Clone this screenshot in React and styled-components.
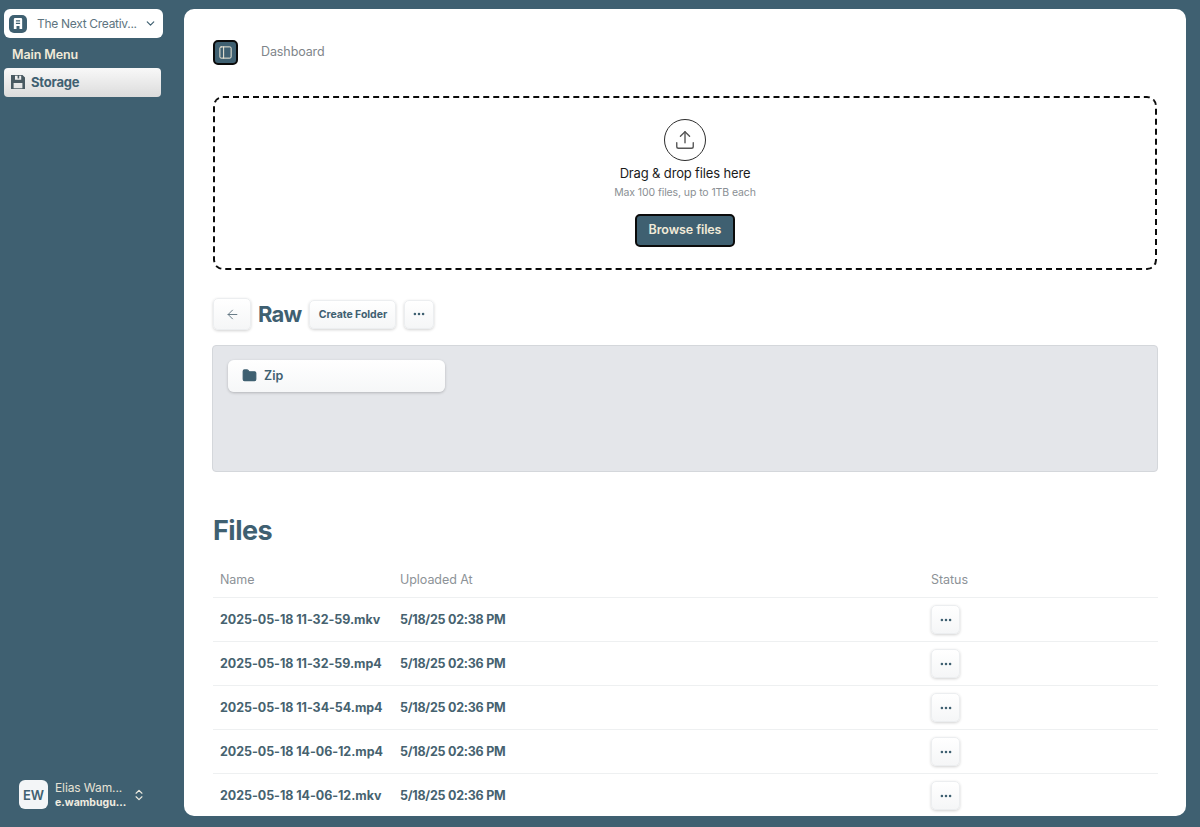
import React from "react";
import styled, { createGlobalStyle } from "styled-components";
import { ArrowLeft, ChevronDown, ChevronsUpDown, Ellipsis, Folder, PanelLeft, Upload } from "lucide-react";

const teal = "#3f6071";
const Global = createGlobalStyle`
  html, body { margin: 0; height: 100%; overflow: hidden; background: ${teal}; }
  body { font-family: Inter, "Open Sans", "Liberation Sans", sans-serif; }
  * { box-sizing: border-box; }
`;
const Shell = styled.div`display: flex; height: 827px; width: 1200px; background: ${teal};`;
const Sidebar = styled.aside`width: 184px; flex: none; display: flex; flex-direction: column; padding: 9px 21px 18px 4px;`;
const Team = styled.div`height: 29px; width: 159px; background: #fff; border-radius: 6px; display: flex; align-items: center; padding: 0 6px 0 5px; gap: 10px; color: #5d7480; font-size: 12px; letter-spacing: -.3px;`;
const TeamLogo = styled.span`width: 18px; height: 18px; border-radius: 5px; background: ${teal}; display: flex; align-items: center; justify-content: center; flex: none;`;
const TeamName = styled.span`flex: 1; min-width: 0; white-space: nowrap;`;
const MenuLabel = styled.div`margin: 8px 0 0 8px; color: #f1ead8; font-size: 12.5px; font-weight: 600; line-height: 17px; letter-spacing: -.1px;`;
const NavItem = styled.div`margin-top: 5px; width: 157px; height: 29px; border-radius: 4px; background: linear-gradient(#f8f8f8, #dcdcdc); display: flex; align-items: center; gap: 6px; padding: 0 0 1px 7px; color: ${teal}; font-size: 13px; font-weight: 700; letter-spacing: -.2px; svg { flex: none; }`;
const UserRow = styled.div`margin-top: auto; display: flex; align-items: center; padding-left: 15px; gap: 5px;`;
const Avatar = styled.div`width: 29px; height: 29px; margin-right: 2px; border-radius: 6px; background: #f3f5f7; color: ${teal}; display: flex; align-items: center; justify-content: center; font-size: 13px; font-weight: 600;`;
const UserText = styled.div`width: 72px; display: flex; flex-direction: column; gap: 1px;`;
const UserName = styled.span`color: #e6e2d5; font-size: 12px; line-height: 15px; white-space: nowrap; letter-spacing: -.1px;`;
const UserMail = styled.span`color: #f0ece0; font-size: 10.5px; font-weight: 700; line-height: 13px; white-space: nowrap;`;
const Main = styled.main`width: 1002px; height: 807px; margin-top: 9px; background: #fff; border-radius: 10px; padding: 31px 28px 0 29px; overflow: hidden; flex: none;`;
const Header = styled.header`display: flex; align-items: center; gap: 23px; height: 25px;`;
const Toggle = styled.div`width: 25px; height: 25px; border-radius: 5px; background: ${teal}; border: 2px solid #0b0b0b; display: flex; align-items: center; justify-content: center;`;
const Crumb = styled.span`color: #80858a; font-size: 12.5px; letter-spacing: -.1px; padding-bottom: 2px;`;
const Drop = styled.section`margin-top: 31px; height: 174px; width: 944px; border: 2px dashed #0b0b0b; border-radius: 10px; display: flex; flex-direction: column; align-items: center; padding-top: 21px;`;
const Circle = styled.div`width: 42px; height: 42px; border-radius: 50%; border: 1.2px solid #2d2d2d; display: flex; align-items: center; justify-content: center;`;
const DropTitle = styled.div`margin-top: 3px; font-size: 13px; font-weight: 400; color: #1b1b1b; line-height: 18px; letter-spacing: -.15px;`;
const DropSub = styled.div`margin-top: 4px; font-size: 10.5px; color: #8a8f94; line-height: 14px; letter-spacing: -.1px;`;
const Browse = styled.button`margin-top: 14px; width: 100px; height: 33px; border-radius: 5px; background: ${teal}; border: 2px solid #0b0b0b; color: #f1ead8; font: 600 12.5px Inter, sans-serif; letter-spacing: -.1px; padding: 0 0 2px;`;
const Toolbar = styled.div`margin-top: 28px; display: flex; align-items: center; height: 32px;`;
const softBtn = `background: linear-gradient(#fff, #f5f6f7); border: 1px solid #eceef0; box-shadow: 0 1px 3px rgba(0,0,0,.18); border-radius: 5px; display: flex; align-items: center; justify-content: center; padding: 0; color: ${teal};`;
const BackBtn = styled.div`${softBtn} width: 38px; height: 32px;`;
const Title = styled.h2`margin: 0 8px 0 7px; font-size: 22px; font-weight: 700; color: ${teal}; letter-spacing: -.8px; line-height: 32px;`;
const SmallBtn = styled.div`${softBtn} height: 29px; width: ${p => p.$w}px; font-size: 10.5px; font-weight: 700; letter-spacing: -.05px; margin-right: 8px;`;
const FolderPanel = styled.section`margin: 15px 0 0 -1px; height: 127px; width: 946px; background: #e4e6ea; border: 1px solid #d4d7db; border-radius: 4px; padding: 14px 15px;`;
const FolderCard = styled.div`width: 217px; height: 32px; border-radius: 6px; background: linear-gradient(#fff, #f6f7f8); box-shadow: 0 1px 3px rgba(0,0,0,.22); display: flex; align-items: center; gap: 7px; padding: 0 0 1px 14px; color: ${teal}; font-size: 12.5px; font-weight: 600;`;
const FilesTitle = styled.h2`margin: 42px 0 0; font-size: 27px; font-weight: 700; color: ${teal}; line-height: 34px; letter-spacing: -.5px;`;
const Row = styled.div`display: grid; grid-template-columns: 180px 531px 1fr; align-items: center; width: 945px; padding-left: 7px; border-bottom: 1px solid #eef0f1; height: ${p => p.$h}px;`;
const HeadCell = styled.span`color: #8d9297; font-size: 12.5px; letter-spacing: -.05px;`;
const Cell = styled.span`color: #46626f; font-size: 12.5px; font-weight: 700; white-space: nowrap; letter-spacing: ${p => p.$track}px;`;
const RowBtn = styled.div`${softBtn} width: 29px; height: 29px;`;
const TableHead = styled.div`margin-top: 13px;`;

const files = [
  ["2025-05-18 11-32-59.mkv", "5/18/25 02:38 PM"],
  ["2025-05-18 11-32-59.mp4", "5/18/25 02:36 PM"],
  ["2025-05-18 11-34-54.mp4", "5/18/25 02:36 PM"],
  ["2025-05-18 14-06-12.mp4", "5/18/25 02:36 PM"],
  ["2025-05-18 14-06-12.mkv", "5/18/25 02:36 PM"],
];

const BuildingMark = () => (
  <svg width="10" height="13" viewBox="0 0 12 14" aria-hidden="true">
    <path fill="#fff" fillRule="evenodd" d="M2.5.5h7A1.5 1.5 0 0 1 11 2v11.5H7.8V10H4.2v3.5H1V2A1.5 1.5 0 0 1 2.5.5ZM3.5 3v1.7h5V3Zm0 3v1.7h5V6Z" />
  </svg>
);

const FloppyMark = () => (
  <svg width="14" height="14" viewBox="0 0 14 14" aria-hidden="true">
    <path fill="#4a5a62" fillRule="evenodd" d="M0 0h11.5L14 2.5V14H0ZM4 .8v4h6.2v-4H8.2v2.6H6.6V.8ZM2.6 8v5.2h8.8V8Z" />
  </svg>
);

export default function App() {
  return (
    <Shell>
      <Global />
      <Sidebar>
        <Team>
          <TeamLogo><BuildingMark /></TeamLogo>
          <TeamName>The Next Creativ...</TeamName>
          <ChevronDown size={13} color="#3f6071" strokeWidth={2.2} />
        </Team>
        <MenuLabel>Main Menu</MenuLabel>
        <NavItem><FloppyMark />Storage</NavItem>
        <UserRow>
          <Avatar>EW</Avatar>
          <UserText>
            <UserName>Elias Wam...</UserName>
            <UserMail>e.wambugu...</UserMail>
          </UserText>
          <ChevronsUpDown size={14} color="#f0ece0" />
        </UserRow>
      </Sidebar>
      <Main>
        <Header>
          <Toggle><PanelLeft size={15} color="#f1ead8" strokeWidth={1.6} /></Toggle>
          <Crumb>Dashboard</Crumb>
        </Header>
        <Drop>
          <Circle><Upload size={22} color="#555" strokeWidth={1.5} /></Circle>
          <DropTitle>Drag &amp; drop files here</DropTitle>
          <DropSub>Max 100 files, up to 1TB each</DropSub>
          <Browse>Browse files</Browse>
        </Drop>
        <Toolbar>
          <BackBtn><ArrowLeft size={15} color="#5f7380" strokeWidth={1.5} /></BackBtn>
          <Title>Raw</Title>
          <SmallBtn $w={87}>Create Folder</SmallBtn>
          <SmallBtn $w={30}><Ellipsis size={14} strokeWidth={2.4} /></SmallBtn>
        </Toolbar>
        <FolderPanel>
          <FolderCard><Folder size={15} color="#3f6071" fill="#3f6071" />Zip</FolderCard>
        </FolderPanel>
        <FilesTitle>Files</FilesTitle>
        <TableHead>
          <Row $h={37}>
            <HeadCell>Name</HeadCell>
            <HeadCell>Uploaded At</HeadCell>
            <HeadCell>Status</HeadCell>
          </Row>
        </TableHead>
        {files.map(([name, date]) => (
          <Row $h={44} key={name}>
            <Cell $track={-0.05}>{name}</Cell>
            <Cell $track={-0.25}>{date}</Cell>
            <RowBtn><Ellipsis size={14} color="#3f6071" strokeWidth={2.4} /></RowBtn>
          </Row>
        ))}
      </Main>
    </Shell>
  );
}
